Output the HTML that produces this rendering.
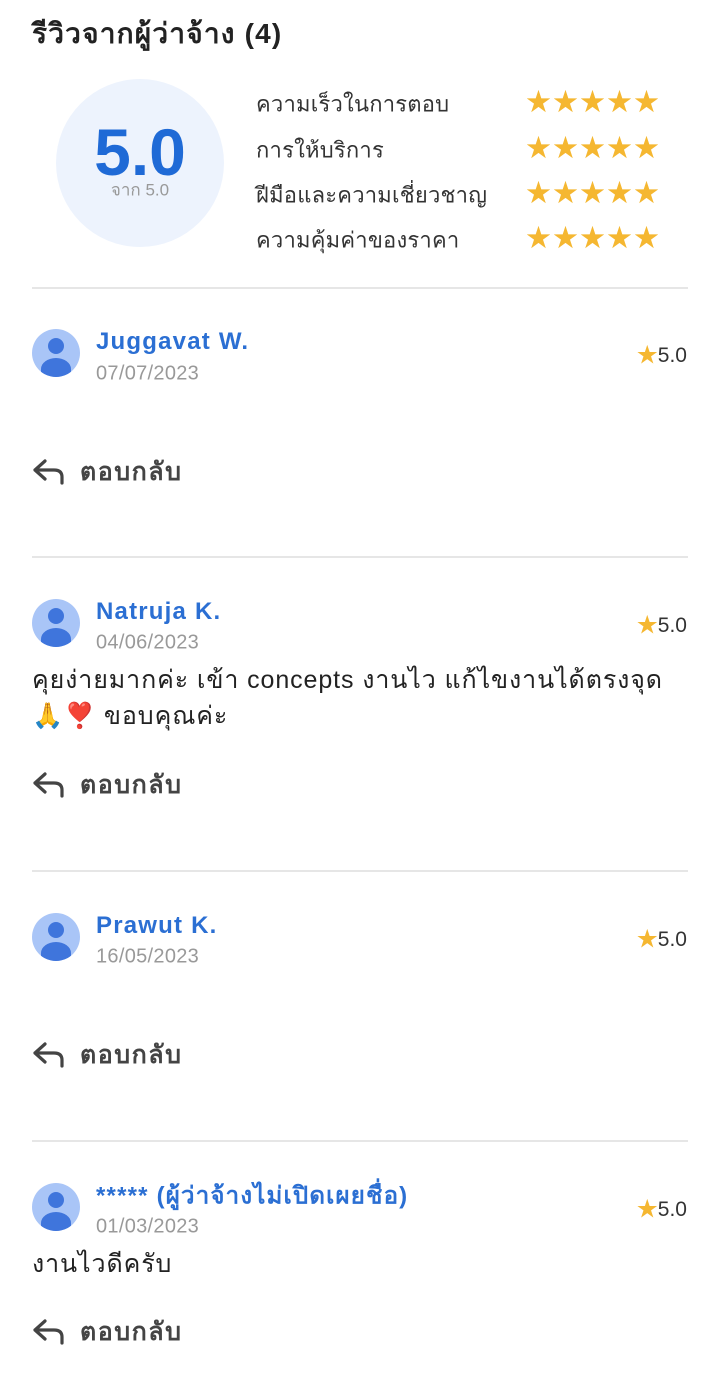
<!DOCTYPE html>
<html><head><meta charset="utf-8"><style>
body{margin:0;width:720px;height:1377px;background:#fff;position:relative;overflow:hidden;font-family:"Liberation Sans","Noto Sans CJK SC",sans-serif;}
.a{position:absolute;white-space:nowrap;}
.t{transform:translateY(-50%);}
.lbl{left:256px;font-size:22px;color:#333;letter-spacing:0.2px;}
.stars{left:526px;font-size:25px;color:#f5b731;letter-spacing:2px;line-height:1;}
.div{position:absolute;left:32px;width:656px;height:2px;background:#e6e6e6;}
.av{position:absolute;left:32px;width:48px;height:48px;border-radius:50%;background:#a9c5f7;overflow:hidden;}
.av:before{content:"";position:absolute;left:16px;top:9px;width:16px;height:16px;border-radius:50%;background:#3f75dc;}
.av:after{content:"";position:absolute;left:9px;top:29px;width:30px;height:22px;border-radius:50% 50% 0 0;background:#3f75dc;}
.name{left:96px;font-size:24px;font-weight:bold;color:#2b6fd3;letter-spacing:1.2px;}
.date{left:96px;font-size:20px;color:#999;letter-spacing:0.3px;}
.rt{right:33px;font-size:21px;color:#333;}
.rt b{color:#f5b731;font-weight:normal;font-size:21px;}
.cm{left:32px;font-size:25px;color:#222;letter-spacing:0.9px;}
.rp{left:32px;font-size:25px;font-weight:bold;color:#444;letter-spacing:1.5px;}
.rp svg{vertical-align:middle;margin-right:14px;position:relative;top:-2px;}
</style></head><body>
<div class="a t" style="left:32px;top:34px;font-size:28px;font-weight:bold;color:#222;letter-spacing:1.2px;">รีวิวจากผู้ว่าจ้าง (4)</div>
<div class="a" style="left:56px;top:79px;width:168px;height:168px;border-radius:50%;background:#edf3fd;"></div>
<div class="a t" style="left:56px;width:168px;text-align:center;top:152px;font-size:66px;font-weight:bold;color:#1f6ad6;">5.0</div>
<div class="a t" style="left:56px;width:168px;text-align:center;top:190px;font-size:17px;color:#999;">จาก 5.0</div>
<div class="a t lbl" style="top:104px">ความเร็วในการตอบ</div>
<div class="a t lbl" style="top:150px">การให้บริการ</div>
<div class="a t lbl" style="top:195px">ฝีมือและความเชี่ยวชาญ</div>
<div class="a t lbl" style="top:240px">ความคุ้มค่าของราคา</div>
<div class="a t stars" style="top:103px">★★★★★</div>
<div class="a t stars" style="top:149px">★★★★★</div>
<div class="a t stars" style="top:194px">★★★★★</div>
<div class="a t stars" style="top:239px">★★★★★</div>
<div class="div" style="top:287px"></div>

<div class="av" style="top:329px"></div>
<div class="a t name" style="top:342px">Juggavat W.</div>
<div class="a t date" style="top:374px">07/07/2023</div>
<div class="a t rt" style="top:354px"><b>★</b>5.0</div>
<div class="a t rp" style="top:472px"><svg width="34" height="30" viewBox="0 0 34 30"><path d="M13 5 L3 14 L13 23 M3 14 H22 Q30 14 30 21 V27" fill="none" stroke="#444" stroke-width="3.2" stroke-linejoin="round" stroke-linecap="round"/></svg>ตอบกลับ</div>
<div class="div" style="top:556px"></div>

<div class="av" style="top:599px"></div>
<div class="a t name" style="top:612px">Natruja K.</div>
<div class="a t date" style="top:643px">04/06/2023</div>
<div class="a t rt" style="top:624px"><b>★</b>5.0</div>
<div class="a t cm" style="top:680px">คุยง่ายมากค่ะ เข้า concepts งานไว แก้ไขงานได้ตรงจุด</div>
<div class="a t cm" style="top:716px">🙏❣️ ขอบคุณค่ะ</div>
<div class="a t rp" style="top:785px"><svg width="34" height="30" viewBox="0 0 34 30"><path d="M13 5 L3 14 L13 23 M3 14 H22 Q30 14 30 21 V27" fill="none" stroke="#444" stroke-width="3.2" stroke-linejoin="round" stroke-linecap="round"/></svg>ตอบกลับ</div>
<div class="div" style="top:870px"></div>

<div class="av" style="top:913px"></div>
<div class="a t name" style="top:926px">Prawut K.</div>
<div class="a t date" style="top:957px">16/05/2023</div>
<div class="a t rt" style="top:938px"><b>★</b>5.0</div>
<div class="a t rp" style="top:1055px"><svg width="34" height="30" viewBox="0 0 34 30"><path d="M13 5 L3 14 L13 23 M3 14 H22 Q30 14 30 21 V27" fill="none" stroke="#444" stroke-width="3.2" stroke-linejoin="round" stroke-linecap="round"/></svg>ตอบกลับ</div>
<div class="div" style="top:1140px"></div>

<div class="av" style="top:1183px"></div>
<div class="a t name" style="top:1195px">***** (ผู้ว่าจ้างไม่เปิดเผยชื่อ)</div>
<div class="a t date" style="top:1227px">01/03/2023</div>
<div class="a t rt" style="top:1208px"><b>★</b>5.0</div>
<div class="a t cm" style="top:1264px">งานไวดีครับ</div>
<div class="a t rp" style="top:1332px"><svg width="34" height="30" viewBox="0 0 34 30"><path d="M13 5 L3 14 L13 23 M3 14 H22 Q30 14 30 21 V27" fill="none" stroke="#444" stroke-width="3.2" stroke-linejoin="round" stroke-linecap="round"/></svg>ตอบกลับ</div>
</body></html>
